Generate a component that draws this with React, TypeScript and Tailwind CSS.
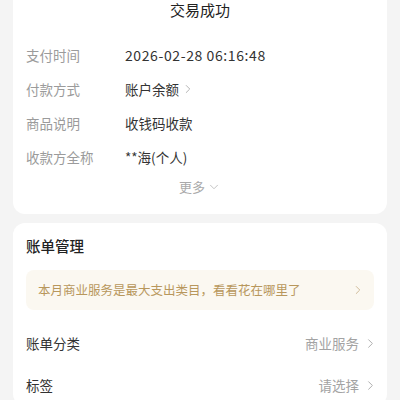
import { ChevronDown, ChevronRight } from 'lucide-react';

const DETAILS: { label: string; value: string; link?: boolean; num?: boolean }[] = [
  { label: '支付时间', value: '2026-02-28 06:16:48', num: true },
  { label: '付款方式', value: '账户余额', link: true },
  { label: '商品说明', value: '收钱码收款' },
  { label: '收款方全称', value: '**海(个人)' },
];

const MANAGE = [
  { label: '账单分类', value: '商业服务' },
  { label: '标签', value: '请选择' },
];

export default function App() {
  return (
    <div
      className="w-[400px] h-[400px] overflow-hidden bg-[#f4f4f4] px-[13px]"
      style={{ fontFamily: '"Noto Sans CJK SC", "Noto Sans", sans-serif' }}
    >
      <div className="bg-white rounded-b-[12px] px-[13px] pb-[14px]">
        <div className="h-[20px] flex items-center justify-center text-[15px] text-[#222]">交易成功</div>

        <div className="mt-[18px]">
          {DETAILS.map((d) => (
            <div key={d.label} className="h-[34px] flex items-center text-[13.5px]">
              <span className="w-[99px] text-[#9b9b9b]">{d.label}</span>
              <span className={`text-[#333] flex items-center ${d.num ? 'text-[14px] tracking-[0.6px]' : ''}`}>
                {d.value}
                {d.link && <ChevronRight className="w-[14px] h-[14px] ml-[2px] text-[#aaa]" strokeWidth={1.5} />}
              </span>
            </div>
          ))}
        </div>

        <div className="h-[26px] flex items-center justify-center text-[13px] text-[#aaa]">
          更多
          <ChevronDown className="w-[14px] h-[14px] ml-[2px] text-[#bbb]" strokeWidth={1.5} />
        </div>
      </div>

      <div className="mt-[9px] bg-white rounded-[12px] px-[13px] pt-[11px]">
        <div className="h-[24px] flex items-center text-[14.5px] font-medium text-[#222]">账单管理</div>

        <div className="mt-[12px] h-[40px] rounded-[8px] bg-[#fbf8f1] flex items-center justify-between pl-[12px] pr-[9px]">
          <span className="text-[12.5px] text-[#b8975c]">本月商业服务是最大支出类目，看看花在哪里了</span>
          <ChevronRight className="w-[14px] h-[14px] text-[#c9b48e]" strokeWidth={1.5} />
        </div>

        <div className="mt-[12px]">
          {MANAGE.map((m) => (
            <div key={m.label} className="h-[42px] flex items-center justify-between text-[13.5px]">
              <span className="text-[#333]">{m.label}</span>
              <span className="flex items-center text-[#a3a3a3] -mr-[4px]">
                {m.value}
                <ChevronRight className="w-[15px] h-[15px] ml-[4px] text-[#aaa]" strokeWidth={1.5} />
              </span>
            </div>
          ))}
        </div>
      </div>
    </div>
  );
}
